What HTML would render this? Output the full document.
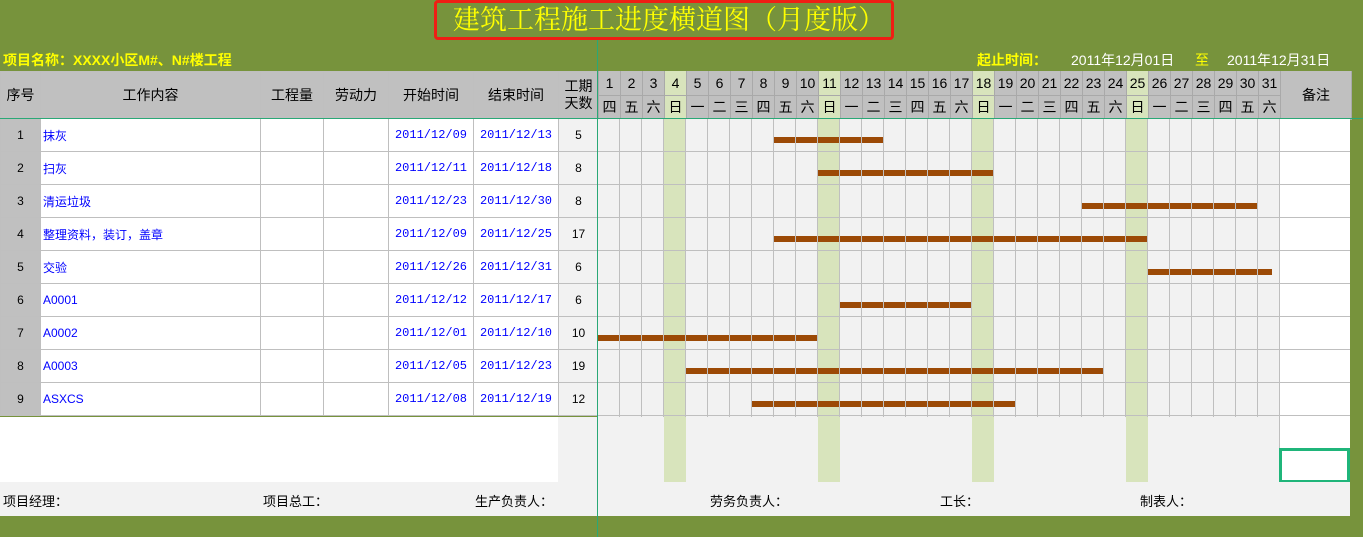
<!DOCTYPE html>
<html><head><meta charset="utf-8"><style>
*{margin:0;padding:0;box-sizing:border-box}
body{width:1363px;height:537px;background:#77933c;position:relative;overflow:hidden;font-family:"Liberation Sans","Noto Sans CJK SC",sans-serif;font-size:13px;color:#000}
.a{position:absolute}
#title{left:434px;top:0;width:460px;height:40px;border:3px solid #f01e14;border-radius:4px;color:#ffff00;font-family:"Liberation Serif","Noto Serif CJK SC",serif;font-size:27px;line-height:34px;padding-left:16px;white-space:nowrap}
.y{color:#ffff00;font-weight:bold;font-size:14px}
table{border-collapse:collapse;table-layout:fixed}
#lt{left:0;top:71px;width:598px}
#lt td{border:1px solid #bfbfbf;height:33px;text-align:center;font-size:12px;white-space:nowrap;overflow:hidden}
#lt tr.h td{background:#c0c0c0;font-size:14px;height:47px}
#lt td.s{background:#c0c0c0}
#lt td.c{text-align:left;padding-left:2px;color:#0000ff}
#lt td.d{color:#0000ff;font-family:"Liberation Mono",monospace;font-size:12px}
#lt td.n{background:#f2f2f2}
#lt td.w{background:#fff}
#dh{left:598px;top:71px;width:752px}
#dh td{border:1px solid #a9a9a9;border-top:none;background:#c0c0c0;height:24px;width:22px;text-align:center;font-size:14px;padding:0}
#dh td.g{background:#d8e4bc}
#dh td.bz{width:71px;font-size:14px}
.we{background:repeating-linear-gradient(to right,transparent 0 66px,#d8e4bc 66px 88px,transparent 88px 154px) #f2f2f2}
.grid{background:repeating-linear-gradient(to right,transparent 0 21px,#bfbfbf 21px 22px),repeating-linear-gradient(to bottom,transparent 0 32px,#bfbfbf 32px 33px)}
.bar{position:absolute;height:6px;background:#9c4a06}
</style></head><body>
<div class="a" id="title">建筑工程施工进度横道图（月度版）</div>
<div class="a y" style="left:3px;top:50px">项目名称：XXXX小区M#、N#楼工程</div>
<div class="a y" style="left:977px;top:50px">起止时间：</div>
<div class="a" style="left:1071px;top:50px;color:#fff;font-size:14px">2011年12月01日</div>
<div class="a y" style="left:1195px;top:50px;font-weight:normal">至</div>
<div class="a" style="left:1227px;top:50px;color:#fff;font-size:14px">2011年12月31日</div>

<table class="a" id="lt">
<colgroup><col style="width:40px"><col style="width:220px"><col style="width:63px"><col style="width:65px"><col style="width:85px"><col style="width:85px"><col style="width:40px"></colgroup>
<tr class="h"><td>序号</td><td>工作内容</td><td>工程量</td><td>劳动力</td><td>开始时间</td><td>结束时间</td><td style="line-height:17px">工期<br>天数</td></tr>
<tr><td class="s">1</td><td class="c w">抹灰</td><td class="w"></td><td class="w"></td><td class="d w">2011/12/09</td><td class="d w">2011/12/13</td><td class="n">5</td></tr>
<tr><td class="s">2</td><td class="c w">扫灰</td><td class="w"></td><td class="w"></td><td class="d w">2011/12/11</td><td class="d w">2011/12/18</td><td class="n">8</td></tr>
<tr><td class="s">3</td><td class="c w">清运垃圾</td><td class="w"></td><td class="w"></td><td class="d w">2011/12/23</td><td class="d w">2011/12/30</td><td class="n">8</td></tr>
<tr><td class="s">4</td><td class="c w">整理资料，装订，盖章</td><td class="w"></td><td class="w"></td><td class="d w">2011/12/09</td><td class="d w">2011/12/25</td><td class="n">17</td></tr>
<tr><td class="s">5</td><td class="c w">交验</td><td class="w"></td><td class="w"></td><td class="d w">2011/12/26</td><td class="d w">2011/12/31</td><td class="n">6</td></tr>
<tr><td class="s">6</td><td class="c w">A0001</td><td class="w"></td><td class="w"></td><td class="d w">2011/12/12</td><td class="d w">2011/12/17</td><td class="n">6</td></tr>
<tr><td class="s">7</td><td class="c w">A0002</td><td class="w"></td><td class="w"></td><td class="d w">2011/12/01</td><td class="d w">2011/12/10</td><td class="n">10</td></tr>
<tr><td class="s">8</td><td class="c w">A0003</td><td class="w"></td><td class="w"></td><td class="d w">2011/12/05</td><td class="d w">2011/12/23</td><td class="n">19</td></tr>
<tr><td class="s">9</td><td class="c w">ASXCS</td><td class="w"></td><td class="w"></td><td class="d w">2011/12/08</td><td class="d w">2011/12/19</td><td class="n">12</td></tr>
</table>

<table class="a" id="dh">
<tr><td>1</td><td>2</td><td>3</td><td class="g">4</td><td>5</td><td>6</td><td>7</td><td>8</td><td>9</td><td>10</td><td class="g">11</td><td>12</td><td>13</td><td>14</td><td>15</td><td>16</td><td>17</td><td class="g">18</td><td>19</td><td>20</td><td>21</td><td>22</td><td>23</td><td>24</td><td class="g">25</td><td>26</td><td>27</td><td>28</td><td>29</td><td>30</td><td>31</td><td class="bz" rowspan="2">备注</td></tr>
<tr><td>四</td><td>五</td><td>六</td><td class="g">日</td><td>一</td><td>二</td><td>三</td><td>四</td><td>五</td><td>六</td><td class="g">日</td><td>一</td><td>二</td><td>三</td><td>四</td><td>五</td><td>六</td><td class="g">日</td><td>一</td><td>二</td><td>三</td><td>四</td><td>五</td><td>六</td><td class="g">日</td><td>一</td><td>二</td><td>三</td><td>四</td><td>五</td><td>六</td></tr>
</table>

<div class="a we" style="left:598px;top:119px;width:681px;height:363px"></div>
<div class="a" style="left:1279px;top:119px;width:71px;height:363px;background:#fff;border-left:1px solid #bfbfbf"></div>
<div class="bar" style="left:774px;top:137px;width:110px"></div>
<div class="bar" style="left:818px;top:170px;width:176px"></div>
<div class="bar" style="left:1082px;top:203px;width:176px"></div>
<div class="bar" style="left:774px;top:236px;width:374px"></div>
<div class="bar" style="left:1148px;top:269px;width:124px"></div>
<div class="bar" style="left:840px;top:302px;width:132px"></div>
<div class="bar" style="left:598px;top:335px;width:220px"></div>
<div class="bar" style="left:686px;top:368px;width:418px"></div>
<div class="bar" style="left:752px;top:401px;width:264px"></div>
<div class="a grid" style="left:598px;top:119px;width:681px;height:298px"></div>
<div class="a" style="left:1279px;top:119px;width:71px;height:298px;background:repeating-linear-gradient(to bottom,transparent 0 32px,#bfbfbf 32px 33px)"></div>

<div class="a" style="left:0;top:417px;width:558px;height:65px;background:#fff"></div>
<div class="a" style="left:558px;top:417px;width:40px;height:65px;background:#f2f2f2"></div>
<div class="a" style="left:1279px;top:448px;width:71px;height:35px;border:3px solid #1fb57a"></div>
<div class="a" style="left:0;top:482px;width:1350px;height:34px;background:#f2f2f2"></div>
<div class="a" style="left:3px;top:491px">项目经理：</div>
<div class="a" style="left:263px;top:491px">项目总工：</div>
<div class="a" style="left:475px;top:491px">生产负责人：</div>
<div class="a" style="left:710px;top:491px">劳务负责人：</div>
<div class="a" style="left:940px;top:491px">工长：</div>
<div class="a" style="left:1140px;top:491px">制表人：</div>
<div class="a" style="left:597px;top:40px;width:1px;height:497px;background:#2aa876"></div>
<div class="a" style="left:0;top:118px;width:1363px;height:1px;background:#2aa876"></div>
</body></html>
